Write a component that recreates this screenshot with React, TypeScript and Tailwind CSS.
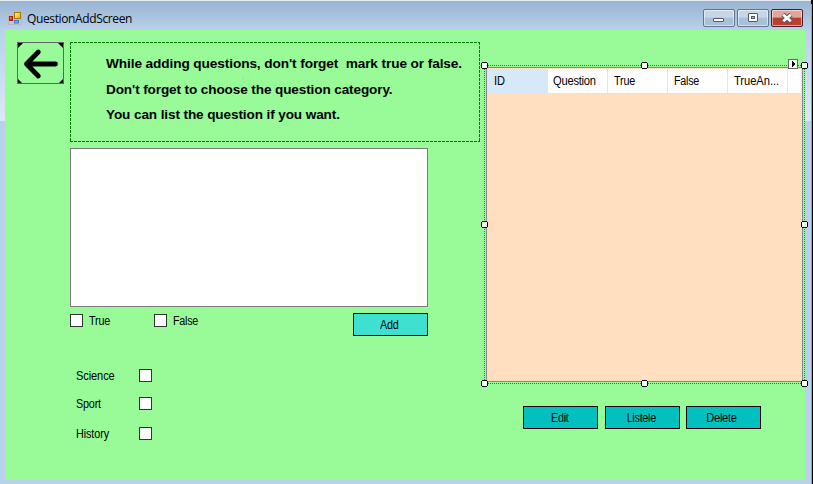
import React from "react";

const labelFont =
  "inline-block font-['Liberation_Sans',Arial,sans-serif] text-[12px] leading-[14px] whitespace-pre text-black";

function Label({ text, className = "origin-left" }: { text: string; className?: string }) {
  return <span className={`${labelFont} ${className}`}>{text}</span>;
}

function CheckBox() {
  return <span className="block size-[13px] shrink-0 border border-[#333333] bg-white" />;
}

function CategoryRow({ text, className, fit }: { text: string; className: string; fit: string }) {
  return (
    <div className={`flex h-[13px] items-center ${className}`}>
      <div className="flex w-[63px] shrink-0">
        <Label text={text} className={`origin-left ${fit}`} />
      </div>
      <CheckBox />
    </div>
  );
}

function FlatButton({ text, className, fit }: { text: string; className: string; fit: string }) {
  return (
    <button className={`flex h-[23px] w-[75px] shrink-0 items-center justify-center border border-black ${className}`}>
      <Label text={text} className={fit} />
    </button>
  );
}

function Handle({ className }: { className: string }) {
  return (
    <svg className={`absolute size-[7px] ${className}`} viewBox="0 0 7 7" shapeRendering="crispEdges">
      <path d="M1 0h5v1h1v5h-1v1h-5v-1h-1v-5h1z" fill="#000" />
      <path d="M1 1h5v5h-5z" fill="#fff" />
    </svg>
  );
}

function CaptionButton({ kind }: { kind: "min" | "max" | "close" }) {
  const close = kind === "close";
  const skin = close
    ? "border-[#511b22] bg-linear-to-b from-[#e4a59a] from-45% to-[#b8402f] to-50%"
    : "border-[#64748e] bg-linear-to-b from-[#c6d6e7] from-45% to-[#a9c0da] to-50%";
  return (
    <div className={`flex h-[18px] w-[32px] items-center justify-center rounded-[2px] border shadow-[inset_0_0_0_1px_#ffffff80] ${skin}`}>
      {kind === "min" && (
        <svg width="12" height="12" viewBox="0 0 12 12">
          <rect x="0.5" y="6.5" width="10" height="3" rx="0.5" fill="#fff" stroke="#535666" />
        </svg>
      )}
      {kind === "max" && (
        <svg width="12" height="12" viewBox="0 0 12 12">
          <rect x="1.5" y="1.5" width="9" height="8" rx="0.5" fill="#fff" stroke="#535666" />
          <rect x="4.5" y="4.5" width="3" height="2" fill="#a9bfd7" stroke="#535666" />
        </svg>
      )}
      {close && (
        <svg width="12" height="12" viewBox="0 0 12 12">
          <path d="M2 2.500l8 7M10 2.500l-8 7" stroke="#535666" strokeWidth="4.800" />
          <path d="M2.200 2.700l7.600 6.600M9.800 2.700l-7.600 6.600" stroke="#fff" strokeWidth="2.800" />
        </svg>
      )}
    </div>
  );
}

function AppIcon() {
  return (
    <svg className="block" width="14" height="14" viewBox="0 0 14 14">
      <defs>
        <linearGradient id="gold" x1="0" y1="0" x2="1" y2="1">
          <stop offset="0" stopColor="#fff0a0" />
          <stop offset="1" stopColor="#eaa800" />
        </linearGradient>
      </defs>
      <rect x="0.5" y="0.5" width="13" height="13" fill="none" stroke="#bcb9b9" />
      <rect x="1.5" y="5.5" width="3" height="4" fill="#d83b2f" stroke="#a81d16" />
      <rect x="2" y="6" width="1.5" height="1.5" fill="#f08a7c" />
      <rect x="6.500" y="1.500" width="6" height="6" fill="url(#gold)" stroke="#a97800" />
      <rect x="6.500" y="9.500" width="4" height="2.500" fill="#76aafa" stroke="#3f74d6" />
    </svg>
  );
}

function BackButton() {
  return (
    <svg className="block h-[42px] w-[47px] shrink-0" viewBox="0 0 47 42">
      <path d="M1 1h5l-5 5zM46 1h-5l5 5zM1 41v-4l4 4zM46 41v-4l-4 4z" fill="#000" />
      <rect x="0.5" y="0.5" width="46" height="41" fill="none" stroke="#646464" />
      <path d="M38.500 22H10M21.300 10L9.500 22L21.300 34" fill="none" stroke="#000" strokeWidth="4.800" strokeLinecap="round" strokeLinejoin="round" />
    </svg>
  );
}

const noteFont =
  "inline-block origin-left font-['Liberation_Sans',Arial,sans-serif] text-[13px] font-bold leading-[16px] tracking-[-0.1px] whitespace-pre text-black";

function HintPanel() {
  return (
    <div className="relative h-[100px] w-[410px] pt-[14px] pl-[36px]">
      <div className="absolute inset-x-0 top-0 h-px bg-[repeating-linear-gradient(90deg,#008000_0_3px,transparent_3px_4px)]" />
      <div className="absolute inset-x-0 bottom-0 h-px bg-[repeating-linear-gradient(90deg,#008000_0_3px,transparent_3px_4px)]" />
      <div className="absolute inset-y-0 left-0 w-px bg-[repeating-linear-gradient(180deg,#008000_0_3px,transparent_3px_4px)]" />
      <div className="absolute inset-y-0 right-0 w-px bg-[repeating-linear-gradient(180deg,#008000_0_3px,transparent_3px_4px)]" />
      <div className="flex flex-col items-start">
        <span className={`${noteFont} scale-x-[1.05]`}>{"While adding questions, don't forget  mark true or false."}</span>
        <span className={`${noteFont} mt-[10px] scale-x-[1.042]`}>Don't forget to choose the question category.</span>
        <span className={`${noteFont} mt-[9px] scale-x-[1.043]`}>You can list the question if you want.</span>
      </div>
    </div>
  );
}

const headCell = "flex w-[60px] items-center border-r border-[#e5e5e5] bg-white pl-[6px]";

function QuestionGrid() {
  return (
    <div className="relative h-[319px] w-[321px] p-[2px]">
      <div className="flex h-[315px] flex-col border border-[#828790] bg-[#ffdfc0] pt-px pr-px pl-px">
        <div className="flex h-[24px] w-full">
          <div className="flex w-[60px] items-center bg-[#d7e8f8] pl-[6px]">
            <Label text="ID" className="origin-left scale-x-[0.92]" />
          </div>
          <div className="flex w-[60px] items-center border-r border-[#e5e5e5] bg-white pl-[5px]">
            <Label text="Question" className="origin-left scale-x-[0.93] tracking-[-0.25px]" />
          </div>
          <div className={headCell}>
            <Label text="True" className="origin-left scale-x-[0.9] tracking-[-0.2px]" />
          </div>
          <div className={headCell}>
            <Label text="False" className="origin-left scale-x-[0.9] tracking-[-0.3px]" />
          </div>
          <div className={headCell}>
            <Label text="TrueAn..." className="origin-left scale-x-[0.93] tracking-[-0.05px]" />
          </div>
          <div className="flex-1 bg-white" />
        </div>
      </div>
      <div className="absolute inset-x-0 top-0 h-px bg-[repeating-linear-gradient(90deg,#4b6b4b_0_1px,transparent_1px_2px)]" />
      <div className="absolute inset-x-0 bottom-0 h-px bg-[repeating-linear-gradient(90deg,#4b6b4b_0_1px,transparent_1px_2px)]" />
      <div className="absolute inset-y-0 left-0 w-px bg-[repeating-linear-gradient(180deg,#4b6b4b_0_1px,transparent_1px_2px)]" />
      <div className="absolute inset-y-0 right-0 w-px bg-[repeating-linear-gradient(180deg,#4b6b4b_0_1px,transparent_1px_2px)]" />
      <Handle className="top-[-3px] left-[-3px]" />
      <Handle className="top-[-3px] left-[157px]" />
      <Handle className="top-[-3px] right-[-3px]" />
      <Handle className="top-[156px] left-[-3px]" />
      <Handle className="top-[156px] right-[-3px]" />
      <Handle className="bottom-[-3px] left-[-3px]" />
      <Handle className="bottom-[-3px] left-[157px]" />
      <Handle className="right-[-3px] bottom-[-3px]" />
      <svg className="absolute top-[-6px] left-[304px] h-[10px] w-[10px]" viewBox="0 0 10 10" shapeRendering="crispEdges">
        <rect x="0.5" y="0.5" width="9" height="9" fill="#fff" stroke="#646464" />
        <path d="M4 2h1v1h1v1h1v2h-1v1h-1v1h-1z" fill="#000" />
      </svg>
    </div>
  );
}

export default function App() {
  return (
    <div className="flex h-[484px] w-[813px] overflow-hidden bg-black">
      <div className="flex w-[811px] shrink-0 flex-col rounded-tr-[4px] bg-[#b9d1ea]">
        <header className="flex h-[30px] shrink-0 items-center border-t border-[#e8edf3] bg-linear-to-b from-[#99b4d1] to-[#b9d1ea] pr-[8px] pl-[8px]">
          <div className="mt-[5px]">
            <AppIcon />
          </div>
          <span className="mt-[6px] ml-[5px] font-['Open_Sans',sans-serif] text-[12px] leading-[16px] tracking-[-0.37px] whitespace-pre text-black">
            QuestionAddScreen
          </span>
          <div className="mt-[5px] ml-auto flex gap-[2px]">
            <CaptionButton kind="min" />
            <CaptionButton kind="max" />
            <CaptionButton kind="close" />
          </div>
        </header>
        <div className="flex bg-[linear-gradient(180deg,#b9d1ea_0,#dce8f5_91px,#b9d1ea_91px)]">
          <div className="w-[5px] shrink-0" />
          <main className="flex h-[450px] w-[800px] shrink-0 bg-[#98fb98]">
            <div className="ml-[12px] w-[47px] pt-[12px]">
              <BackButton />
            </div>
            <div className="ml-[6px] flex w-[410px] shrink-0 flex-col pt-[12px]">
              <HintPanel />
              <div className="mt-[6px] h-[159px] w-[358px] border border-[#7a7a7a] bg-white" />
              <div className="mt-[6px] flex h-[23px] w-[358px]">
                <div className="mt-px flex h-[13px] w-[84px] items-center">
                  <CheckBox />
                  <Label text="True" className="ml-[6px] origin-left scale-x-[0.9] tracking-[-0.2px]" />
                </div>
                <div className="mt-px flex h-[13px] items-center">
                  <CheckBox />
                  <Label text="False" className="ml-[6px] origin-left scale-x-[0.9] tracking-[-0.3px]" />
                </div>
                <div className="ml-auto">
                  <FlatButton text="Add" className="bg-[#40e0d0] pr-[3px]" fit="scale-x-[0.9] tracking-[-0.3px]" />
                </div>
              </div>
              <div className="mt-[33px] ml-[6px] flex flex-col">
                <CategoryRow text="Science" className="" fit="scale-x-[0.92] tracking-[-0.1px]" />
                <CategoryRow text="Sport" className="mt-[15px]" fit="scale-x-[0.9] tracking-[-0.2px]" />
                <CategoryRow text="History" className="mt-[17px]" fit="scale-x-[0.9] tracking-[-0.1px]" />
              </div>
            </div>
            <div className="ml-[4px] flex w-[321px] shrink-0 flex-col pt-[35px]">
              <QuestionGrid />
              <div className="mt-[22px] ml-[39px] flex">
                <FlatButton text="Edit" className="bg-[#00c0c0] pr-[2px]" fit="scale-x-[0.9] tracking-[-0.3px]" />
                <FlatButton text="Listele" className="ml-[7px] bg-[#00c0c0] pr-[2px]" fit="scale-x-[0.9] tracking-[-0.3px]" />
                <FlatButton text="Delete" className="ml-[6px] bg-[#00c0c0] pr-[4px]" fit="scale-x-[0.92] tracking-[-0.3px]" />
              </div>
            </div>
          </main>
        </div>
      </div>
      <div className="mt-[4px] w-px shrink-0 bg-[#3cc3e8]" />
    </div>
  );
}
